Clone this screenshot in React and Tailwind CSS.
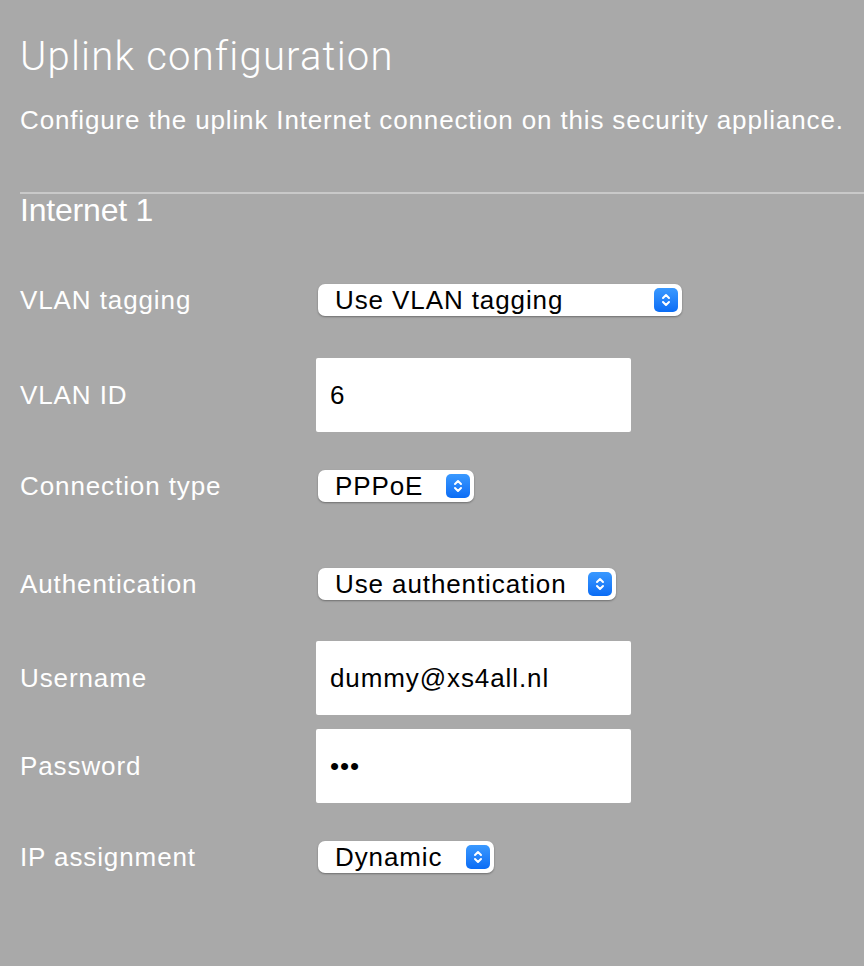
import React from "react";

const font = { fontFamily: '"Liberation Sans", Arial, sans-serif' };

function Chevron() {
  return (
    <span className="flex h-[24px] w-[24px] items-center justify-center rounded-[5px] bg-gradient-to-b from-[#3a99ff] to-[#0a6cf5]">
      <svg width="12" height="16" viewBox="0 0 12 16" fill="none" stroke="white" strokeWidth="2" strokeLinecap="round" strokeLinejoin="round">
        <path d="M3 6 L6 3 L9 6" />
        <path d="M3 10 L6 13 L9 10" />
      </svg>
    </span>
  );
}

function Select({ value, width }) {
  return (
    <div
      className="flex h-[32px] items-center justify-between rounded-[7px] bg-white pl-[17px] pr-[4px] text-[26px] tracking-[0.9px] text-black shadow-[0_1px_2px_rgba(0,0,0,0.35)]"
      style={{ width }}
    >
      <span className="leading-none">{value}</span>
      <Chevron />
    </div>
  );
}

function Input({ value }) {
  return (
    <div className="flex h-[74px] w-[315px] items-center rounded-[2px] bg-white pl-[14px] text-[26px] tracking-[0.9px] text-black">
      <span className="leading-none">{value}</span>
    </div>
  );
}

function Row({ label, children, className = "" }) {
  return (
    <div className={"flex items-center " + className}>
      <div className="w-[296px] shrink-0 text-[26px] leading-none tracking-[0.9px] text-white">{label}</div>
      {children}
    </div>
  );
}

export default function App() {
  return (
    <div className="min-h-[966px] w-full overflow-hidden bg-[#a9a9a9] pl-[20px]" style={font}>
      <h1 className="pt-[37px] text-[40px] font-light leading-none tracking-[1.2px] text-white" style={{ fontFamily: 'Roboto, "Liberation Sans", Arial, sans-serif' }}>
        Uplink configuration
      </h1>
      <p className="mt-[30px] whitespace-nowrap text-[26px] leading-none tracking-[0.85px] text-white">
        Configure the uplink Internet connection on this security appliance.
      </p>
      <div className="mt-[59px] h-[2px] bg-[#c9c9c9]" />
      <h2 className="mt-0 text-[32px] leading-none tracking-[-0.2px] text-white">Internet 1</h2>

      <div className="mt-[58px] flex flex-col">
        <Row label="VLAN tagging">
          <div className="pl-[2px]"><Select value="Use VLAN tagging" width={364} /></div>
        </Row>
        <Row label="VLAN ID" className="mt-[42px]">
          <Input value="6" />
        </Row>
        <Row label="Connection type" className="mt-[38px]">
          <div className="pl-[2px]"><Select value="PPPoE" width={156} /></div>
        </Row>
        <Row label="Authentication" className="mt-[66px]">
          <div className="pl-[2px]"><Select value="Use authentication" width={298} /></div>
        </Row>
        <Row label="Username" className="mt-[41px]">
          <Input value="dummy@xs4all.nl" />
        </Row>
        <Row label="Password" className="mt-[14px]">
          <Input value="•••" />
        </Row>
        <Row label="IP assignment" className="mt-[38px]">
          <div className="pl-[2px]"><Select value="Dynamic" width={176} /></div>
        </Row>
      </div>
    </div>
  );
}
